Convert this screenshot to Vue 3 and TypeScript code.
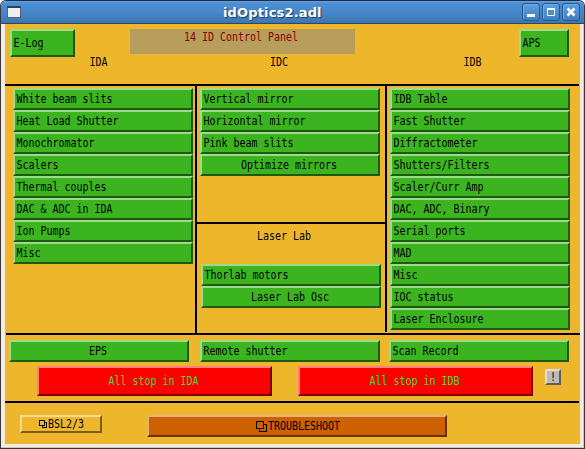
<script setup lang="ts">
const ida: string[] = [
  'White beam slits', 'Heat Load Shutter', 'Monochromator', 'Scalers',
  'Thermal couples', 'DAC & ADC in IDA', 'Ion Pumps', 'Misc',
]
const idc: string[] = ['Vertical mirror', 'Horizontal mirror', 'Pink beam slits']
const idb: string[] = [
  'IDB Table', 'Fast Shutter', 'Diffractometer', 'Shutters/Filters', 'Scaler/Curr Amp',
  'DAC, ADC, Binary', 'Serial ports', 'MAD', 'Misc', 'IOC status', 'Laser Enclosure',
]
</script>

<template>
  <div class="window">
    <header class="titlebar">
      <svg class="app-icon" width="14" height="12" viewBox="0 0 14 12">
        <rect x="0.5" y="0.5" width="13" height="11" fill="#eeeeec" stroke="#5b6268" />
        <path d="M0 1H14" stroke="#2d4158" stroke-width="2" />
      </svg>
      <h1>idOptics2.adl</h1>
      <div class="controls">
        <span class="ctl"><svg width="16" height="16"><path d="M4 11.5H12" stroke="#fff" stroke-width="3" /></svg></span>
        <span class="ctl"><svg width="16" height="16"><path d="M4 5H12" stroke="#fff" stroke-width="2" /><path d="M4.5 5V11.5H11.5V5" fill="none" stroke="#fff" /></svg></span>
        <span class="ctl"><svg width="16" height="16"><path d="M4.5 4.5L11.5 11.5M11.5 4.5L4.5 11.5" stroke="#fff" stroke-width="2.6" /></svg></span>
      </div>
    </header>

    <main class="panel">
      <div class="top">
        <button class="btn tall elog"><span class="t">E-Log</span></button>
        <div class="heading"><span class="t">14 ID Control Panel</span></div>
        <button class="btn tall aps"><span class="t">APS</span></button>
      </div>
      <div class="labels">
        <span class="t">IDA</span><span class="t">IDC</span><span class="t">IDB</span>
      </div>
      <div class="rule short"></div>

      <div class="columns">
        <section class="col ida">
          <button v-for="n in ida" :key="n" class="btn"><span class="t">{{ n }}</span></button>
        </section>
        <div class="vrule"></div>
        <section class="middle">
          <div class="col idc">
            <button v-for="n in idc" :key="n" class="btn"><span class="t">{{ n }}</span></button>
            <button class="btn center"><span class="t">Optimize mirrors</span></button>
          </div>
          <div class="rule"></div>
          <div class="col laser">
            <div class="lab"><span class="t">Laser Lab</span></div>
            <button class="btn"><span class="t">Thorlab motors</span></button>
            <button class="btn center"><span class="t">Laser Lab Osc</span></button>
          </div>
        </section>
        <div class="vrule last"></div>
        <section class="col idb">
          <button v-for="n in idb" :key="n" class="btn"><span class="t">{{ n }}</span></button>
        </section>
      </div>

      <div class="rule inset"></div>
      <div class="common">
        <button class="btn center"><span class="t">EPS</span></button>
        <button class="btn remote"><span class="t">Remote shutter</span></button>
        <button class="btn scan"><span class="t">Scan Record</span></button>
      </div>
      <div class="stops">
        <button class="btn center stop"><span class="t">All stop in IDA</span></button>
        <button class="btn center stop second"><span class="t">All stop in IDB</span></button>
        <button class="btn center bang"><span class="t">!</span></button>
      </div>
      <div class="rule short"></div>
      <div class="footer">
        <button class="btn center bsl">
          <svg class="pages" width="9" height="9" shape-rendering="crispEdges" fill="none" stroke="#000">
            <rect x="0.5" y="0.5" width="5" height="5" /><path d="M6 2.5H7.5V7.5H3.5V6" />
          </svg>
          <span class="t">BSL2/3</span>
        </button>
        <button class="btn center trouble">
          <svg class="pages" width="12" height="11" shape-rendering="crispEdges" fill="none" stroke="#000">
            <rect x="0.5" y="0.5" width="7" height="7" /><path d="M8 3.5H10.5V10.5H3.5V8" />
          </svg>
          <span class="t">TROUBLESHOOT</span>
        </button>
      </div>
    </main>
  </div>
</template>

<style>
body { margin: 0; background: #fff; overflow: hidden; }
</style>

<style scoped>
.window {
  box-sizing: border-box;
  width: 585px;
  height: 449px;
  border: 1px solid #3b3735;
  border-top-color: #1d2b3b;
  border-radius: 6px 6px 0 0;
  background: #f1ebe4;
  box-shadow: inset -1px -1px 0 #cfc8be;
  overflow: hidden;
}
.titlebar {
  box-sizing: border-box;
  height: 23px;
  display: flex;
  align-items: center;
  padding: 0 4px 0 6px;
  border-bottom: 1px solid #26486d;
  background: linear-gradient(#6ba3e0 0, #4a8fd6 2px, #4587c8 12px, #3c76b0 100%);
}
h1 {
  margin: 2px auto 0 202px;
  font: bold 13px/20px "DejaVu Sans", sans-serif;
  letter-spacing: 0.15px;
  color: #fff;
  text-shadow: 1px 1px 1px #1c3d60;
}
.controls { display: flex; gap: 2px; }
.ctl {
  width: 16px;
  height: 16px;
  border: 1px solid #2b5686;
  border-radius: 3px;
  background: linear-gradient(#5d9fe0, #3f7fc0);
  box-shadow: inset 1px 1px 0 #6eaae6;
}
.ctl svg { display: block; }
.panel {
  width: 575px;
  height: 420px;
  margin-left: 4px;
  background: #eeb62b;
  font: 10px/12px "DejaVu Sans Mono", monospace;
  color: #000;
}
.t {
  display: inline-block;
  letter-spacing: -0.02px;
  white-space: pre;
  transform: scaleY(1.25);
}
.btn {
  box-sizing: border-box;
  display: flex;
  align-items: center;
  width: 180px;
  height: 22px;
  margin: 0;
  padding: 0 1.5px;
  border: 2px solid;
  border-color: #9ddb8d #1e5a10 #1e5a10 #9ddb8d;
  border-radius: 0;
  background: #3cb420;
  color: #000;
  font: inherit;
}
.center { justify-content: center; padding: 0 2px 0 0; }
.top { display: flex; padding: 5px 0 0 5px; height: 28px; }
.tall { height: 28px; }
.elog { width: 65px; }
.aps { width: 50px; }
.heading {
  box-sizing: border-box;
  width: 225px;
  height: 25px;
  margin: 0 164px 0 55px;
  padding-right: 3px;
  background: #b89e5c;
  color: #8b0000;
  text-align: center;
  line-height: 16px;
}
.labels {
  display: grid;
  grid-template-columns: 187px 174px 213px;
  box-sizing: border-box;
  height: 27px;
  line-height: 10px;
  text-align: center;
}
.labels .t { height: 10px; }
.rule { height: 2px; background: #000; }
.short { width: 574px; }
.inset { margin-left: 1px; }
.columns {
  display: grid;
  grid-template-columns: 190px 2px 188px 2px 193px;
  height: 247px;
}
.vrule { background: #000; }
.vrule.last { height: 246px; }
.col { display: flex; flex-direction: column; }
.ida { padding: 2px 0 0 8px; }
.idc { padding: 2px 0 0 3px; height: 134px; }
.laser { padding-left: 4px; }
.lab { height: 40px; text-align: center; line-height: 23px; margin-right: 18px; }
.idb { padding: 2px 0 0 3px; }
.common { display: flex; padding: 5px 0 4px 4px; }
.remote { margin-left: 11px; }
.scan { margin-left: 9px; }
.stops { display: flex; height: 35px; padding-left: 32px; }
.stop {
  width: 235px;
  height: 30px;
  background: #fd0000;
  border-color: #fe8080 #7a0000 #7a0000 #fe8080;
  color: #46dc30;
}
.second { margin-left: 26px; }
.bang {
  width: 16px;
  height: 16px;
  margin: 3px 0 0 12px;
  padding: 0;
  background: #bbb;
  border-color: #ddd #5d5d5d #5d5d5d #ddd;
}
.footer { display: flex; padding: 12px 0 0 15px; }
.bsl {
  width: 82px;
  height: 18px;
  padding: 0 0 0 1px;
  background: #eeb62b;
  border-color: #f6da95 #7a5c14 #7a5c14 #f6da95;
}
.trouble {
  width: 300px;
  margin-left: 45px;
  padding: 0 0 0 2px;
  background: #cd6100;
  border-color: #e6b080 #663000 #663000 #e6b080;
}
.pages { flex: none; }
</style>
